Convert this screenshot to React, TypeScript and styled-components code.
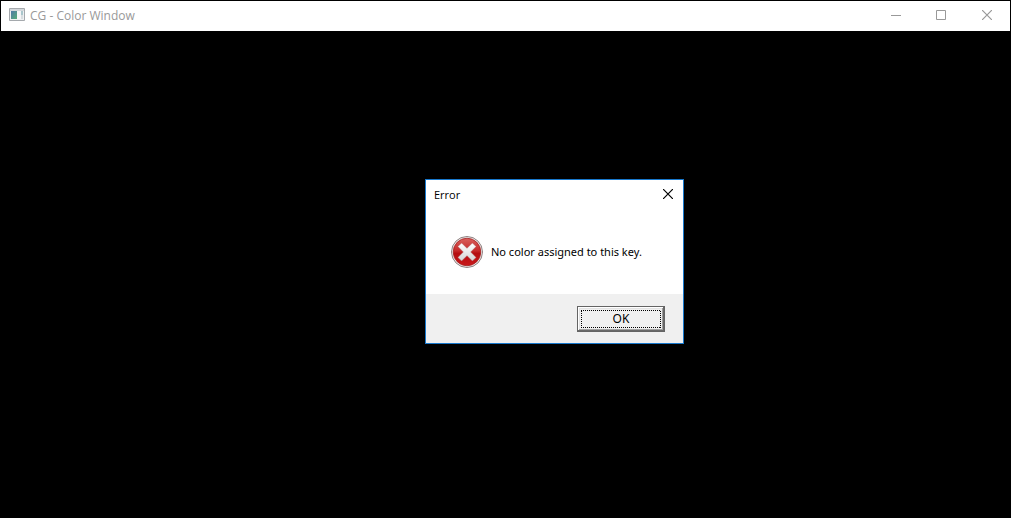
import React from "react";
import styled, { createGlobalStyle } from "styled-components";

const GlobalStyle = createGlobalStyle`
  * { box-sizing: border-box; }
  body {
    margin: 0;
    background: #000;
    font-family: "Noto Sans", "Open Sans", sans-serif;
    font-size: 11px;
    line-height: 16px;
    color: #000;
  }
  h1, h2, p { margin: 0; font-size: inherit; font-weight: 400; }
`;

const Window = styled.main`
  position: relative;
  min-height: 100vh;
  padding: 1px;
  background: #000;
`;

const TitleBar = styled.header<{ $inactive?: boolean }>`
  display: flex;
  align-items: center;
  height: 30px;
  padding-left: 8px;
  background: #fff;
  color: ${(p) => (p.$inactive ? "#999" : "#000")};
  font-family: "Open Sans", "Noto Sans", sans-serif;
  font-size: ${(p) => (p.$inactive ? 12 : 11)}px;
`;

const Title = styled.h1`
  flex: 1;
`;

const AppIcon = styled.svg`
  display: block;
  width: 16px;
  height: 16px;
  margin-right: 5px;
`;

const CaptionButton = styled.button<{ $width: number }>`
  display: grid;
  place-items: center;
  width: ${(p) => p.$width}px;
  height: 30px;
  padding: 0 0 2px;
  border: 0;
  background: transparent;
  color: inherit;

  svg { display: block; }
`;

const Dialog = styled.section`
  position: absolute;
  top: 179px;
  left: 425px;
  width: 259px;
  border: 1px solid #1878cc;
  background: #fff;
`;

const Message = styled.div`
  display: flex;
  align-items: center;
  gap: 8px;
  height: 84px;
  padding-left: 25px;

  svg { display: block; }
`;

const Footer = styled.footer`
  display: flex;
  justify-content: flex-end;
  padding: 12px 18px 11px;
  background: #f0f0f0;
`;

const PushButton = styled.button`
  width: 88px;
  height: 26px;
  padding: 2px;
  border: 1px solid #646464;
  background: #f0f0f0;
  box-shadow: inset -1px -1px #696969, inset 1px 1px #fff, inset -2px -2px #a0a0a0, inset 2px 2px #e3e3e3;
  color: #000;
  font: inherit;
  font-size: 12px;
`;

const FocusRing = styled.span`
  display: grid;
  place-items: center;
  height: 20px;
  margin: 0 1px;
  position: relative;

  svg { position: absolute; inset: 0; }
`;

const CloseGlyph = () => (
  <svg width="10" height="10" viewBox="0 0 10 10" stroke="currentColor" strokeWidth="1.2" aria-hidden="true">
    <path d="M0 0 10 10M10 0 0 10" />
  </svg>
);

const ErrorIcon = () => (
  <svg width="32" height="32" viewBox="0 0 32 32" aria-hidden="true">
    <defs>
      <linearGradient id="red" x1="0" y1="0" x2="0" y2="1">
        <stop offset="0" stopColor="#d9605c" />
        <stop offset=".45" stopColor="#c62a2a" />
        <stop offset=".55" stopColor="#b50d10" />
        <stop offset="1" stopColor="#c9181b" />
      </linearGradient>
      <linearGradient id="cross" x1="0" y1="0" x2="0" y2="1">
        <stop offset="0" stopColor="#fff" />
        <stop offset="1" stopColor="#d4d4d4" />
      </linearGradient>
    </defs>
    <circle cx="16" cy="16" r="15.5" fill="#f0eeee" stroke="#8e8080" />
    <circle cx="16" cy="16" r="13.8" fill="url(#red)" stroke="#a52020" strokeWidth=".8" />
    <path
      d="M10.6 6.9 16 12.3 21.4 6.9 25.1 10.6 19.7 16 25.1 21.4 21.4 25.1 16 19.7 10.6 25.1 6.9 21.4 12.3 16 6.9 10.6Z"
      fill="url(#cross)"
      stroke="#b06060"
      strokeWidth=".5"
      strokeLinejoin="round"
    />
  </svg>
);

export default function App() {
  return (
    <>
      <GlobalStyle />
      <Window>
        <TitleBar $inactive>
          <AppIcon viewBox="0 0 16 16" aria-hidden="true">
            <defs>
              <linearGradient id="pane" x1="0" y1="0" x2="1" y2="1">
                <stop offset="0" stopColor="#4f78a8" />
                <stop offset="1" stopColor="#55ad78" />
              </linearGradient>
            </defs>
            <path d="M.5 .5h15v12H.5z" fill="#eef0f2" stroke="#a5a9ad" />
            <path d="M1 1h14v2H1z" fill="#d3d7db" />
            <path d="M2 3h6v8H2z" fill="url(#pane)" />
            <path d="M8 3h4v8H8z" fill="#f4f5f7" />
            <path d="M12 3h2v4h-2z" fill="#a9c6cc" />
            <path d="M12 7h2v4h-2z" fill="#d8dde0" />
          </AppIcon>
          <Title>CG - Color Window</Title>
          <CaptionButton $width={45} aria-label="Minimize">
            <svg width="10" height="10" stroke="currentColor" aria-hidden="true">
              <path d="M0 5.5h10" />
            </svg>
          </CaptionButton>
          <CaptionButton $width={46} aria-label="Maximize">
            <svg width="10" height="10" fill="none" stroke="currentColor" aria-hidden="true">
              <path d="M.5 .5h9v9h-9z" />
            </svg>
          </CaptionButton>
          <CaptionButton $width={46} aria-label="Close">
            <CloseGlyph />
          </CaptionButton>
        </TitleBar>
        <Dialog role="dialog" aria-labelledby="dialog-title">
          <TitleBar>
            <Title as="h2" id="dialog-title">Error</Title>
            <CaptionButton $width={30} aria-label="Close">
              <CloseGlyph />
            </CaptionButton>
          </TitleBar>
          <Message>
            <ErrorIcon />
            <p>No color assigned to this key.</p>
          </Message>
          <Footer>
            <PushButton>
              <FocusRing>
                <svg width="80" height="20" fill="none" stroke="#000" strokeDasharray="1 1" aria-hidden="true">
                  <path d="M0 1.5h80M0 18.5h80M.5 2v17M79.5 2v17" />
                </svg>
                OK
              </FocusRing>
            </PushButton>
          </Footer>
        </Dialog>
      </Window>
    </>
  );
}
